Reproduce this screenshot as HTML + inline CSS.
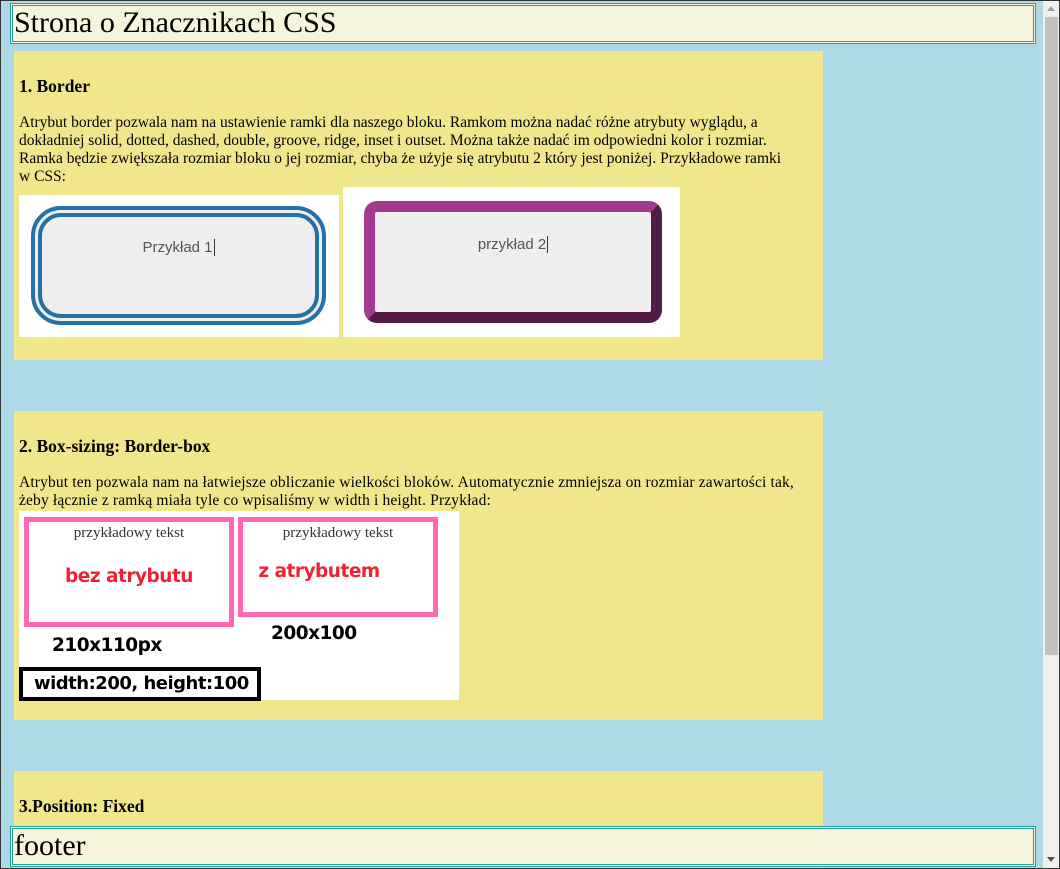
<!DOCTYPE html>
<html><head><meta charset="utf-8"><style>
*{margin:0;padding:0;box-sizing:border-box}
html,body{width:1060px;height:869px;overflow:hidden}
body{background:#add8e6;font-family:"Liberation Serif",serif;position:relative;color:#000}
.frame{position:absolute;left:0;top:0;width:1060px;height:869px;border:1px solid #333;pointer-events:none;z-index:10}
.hdr{position:absolute;left:10px;width:1026px;height:41px;border:3px double #2aa198;background:#f5f5dc;font-size:30px;padding-left:1px;line-height:33px;z-index:5}
.sec{position:absolute;left:14px;width:809px;background:#f0e68c;font-size:15.5px;line-height:18px}
.sec h3{position:absolute;left:5px;font-size:17.5px;font-weight:bold}
.sec p{position:absolute;left:5px;white-space:nowrap}
.sb{position:absolute;left:1043px;top:1px;width:16px;height:867px;background:#f0f0f0}
.thumb{position:absolute;left:1045px;top:17px;width:13px;height:638px;background:#c1c1c1}
.sans{font-family:"Liberation Sans",sans-serif}
.big{font-family:"DejaVu Sans","Liberation Sans",sans-serif;font-weight:bold;font-size:18.5px;letter-spacing:-0.5px;white-space:nowrap}
</style></head><body>
<div class="hdr" style="top:3px">Strona o Znacznikach CSS</div>

<div class="sec" style="top:51px;height:309px">
<h3 style="top:26px">1. Border</h3>
<p style="top:63px">Atrybut border pozwala nam na ustawienie ramki dla naszego bloku. Ramkom można nadać różne atrybuty wyglądu, a<br>dokładniej solid, dotted, dashed, double, groove, ridge, inset i outset. Można także nadać im odpowiedni kolor i rozmiar.<br>Ramka będzie zwiększała rozmiar bloku o jej rozmiar, chyba że użyje się atrybutu 2 który jest poniżej. Przykładowe ramki<br>w CSS:</p>
</div>
<div style="position:absolute;left:19px;top:195px;width:320px;height:142px;background:#fff">
 <div class="sans" style="position:absolute;left:12px;top:11px;width:295px;height:119px;border:11px double #2471a8;border-radius:30px;background:#eee;text-align:center;font-size:15px;color:#555;padding-top:22px">Przykład 1<span style="border-left:1px solid #333;margin-left:1px"></span></div>
</div>
<div style="position:absolute;left:343px;top:187px;width:337px;height:150px;background:#fff">
 <div class="sans" style="position:absolute;left:21px;top:14px;width:298px;height:122px;border:11px solid;border-color:#a23b8f #531c47 #531c47 #a23b8f;border-radius:13px;background:#eee;text-align:center;font-size:15px;color:#555;padding-top:24px">przykład 2<span style="border-left:1px solid #333;margin-left:1px"></span></div>
</div>

<div class="sec" style="top:411px;height:309px">
<h3 style="top:26px">2. Box-sizing: Border-box</h3>
<p style="top:63px;letter-spacing:0.15px">Atrybut ten pozwala nam na łatwiejsze obliczanie wielkości bloków. Automatycznie zmniejsza on rozmiar zawartości tak,<br>żeby łącznie z ramką miała tyle co wpisaliśmy w width i height. Przykład:</p>
</div>
<div style="position:absolute;left:19px;top:511px;width:440px;height:189px;background:#fff">
 <div style="position:absolute;left:5px;top:6px;width:210px;height:110px;border:5px solid #ff69b4;text-align:center;font-size:15px;color:#333;padding-top:3px">przykładowy tekst
  <div class="big" style="color:#ee2233;margin-top:24px">bez atrybutu</div></div>
 <div style="position:absolute;left:219px;top:6px;width:200px;height:100px;border:5px solid #ff69b4;text-align:center;font-size:15px;color:#333;padding-top:3px">przykładowy tekst
  <div class="big" style="color:#ee2233;margin-top:19px;margin-right:38px">z atrybutem</div></div>
 <div class="big" style="position:absolute;left:33px;top:124px">210x110px</div>
 <div class="big" style="position:absolute;left:252px;top:112px">200x100</div>
 <div class="big" style="position:absolute;left:0px;top:156px;width:242px;height:34px;border:4px solid #000;padding-left:11px;line-height:26px;font-size:18px">width:200, height:100</div>
</div>

<div class="sec" style="top:771px;height:98px">
<h3 style="top:26px">3.Position: Fixed</h3>
</div>

<div class="hdr" style="top:826px">footer</div>
<div class="sb"></div>
<div class="thumb"></div>
<div style="position:absolute;left:1047px;top:6px;width:0;height:0;border-left:4px solid transparent;border-right:4px solid transparent;border-bottom:5px solid #a0a0a0"></div>
<div style="position:absolute;left:1047px;top:857px;width:0;height:0;border-left:4px solid transparent;border-right:4px solid transparent;border-top:5px solid #505050"></div>
<div class="frame"></div>
</body></html>
